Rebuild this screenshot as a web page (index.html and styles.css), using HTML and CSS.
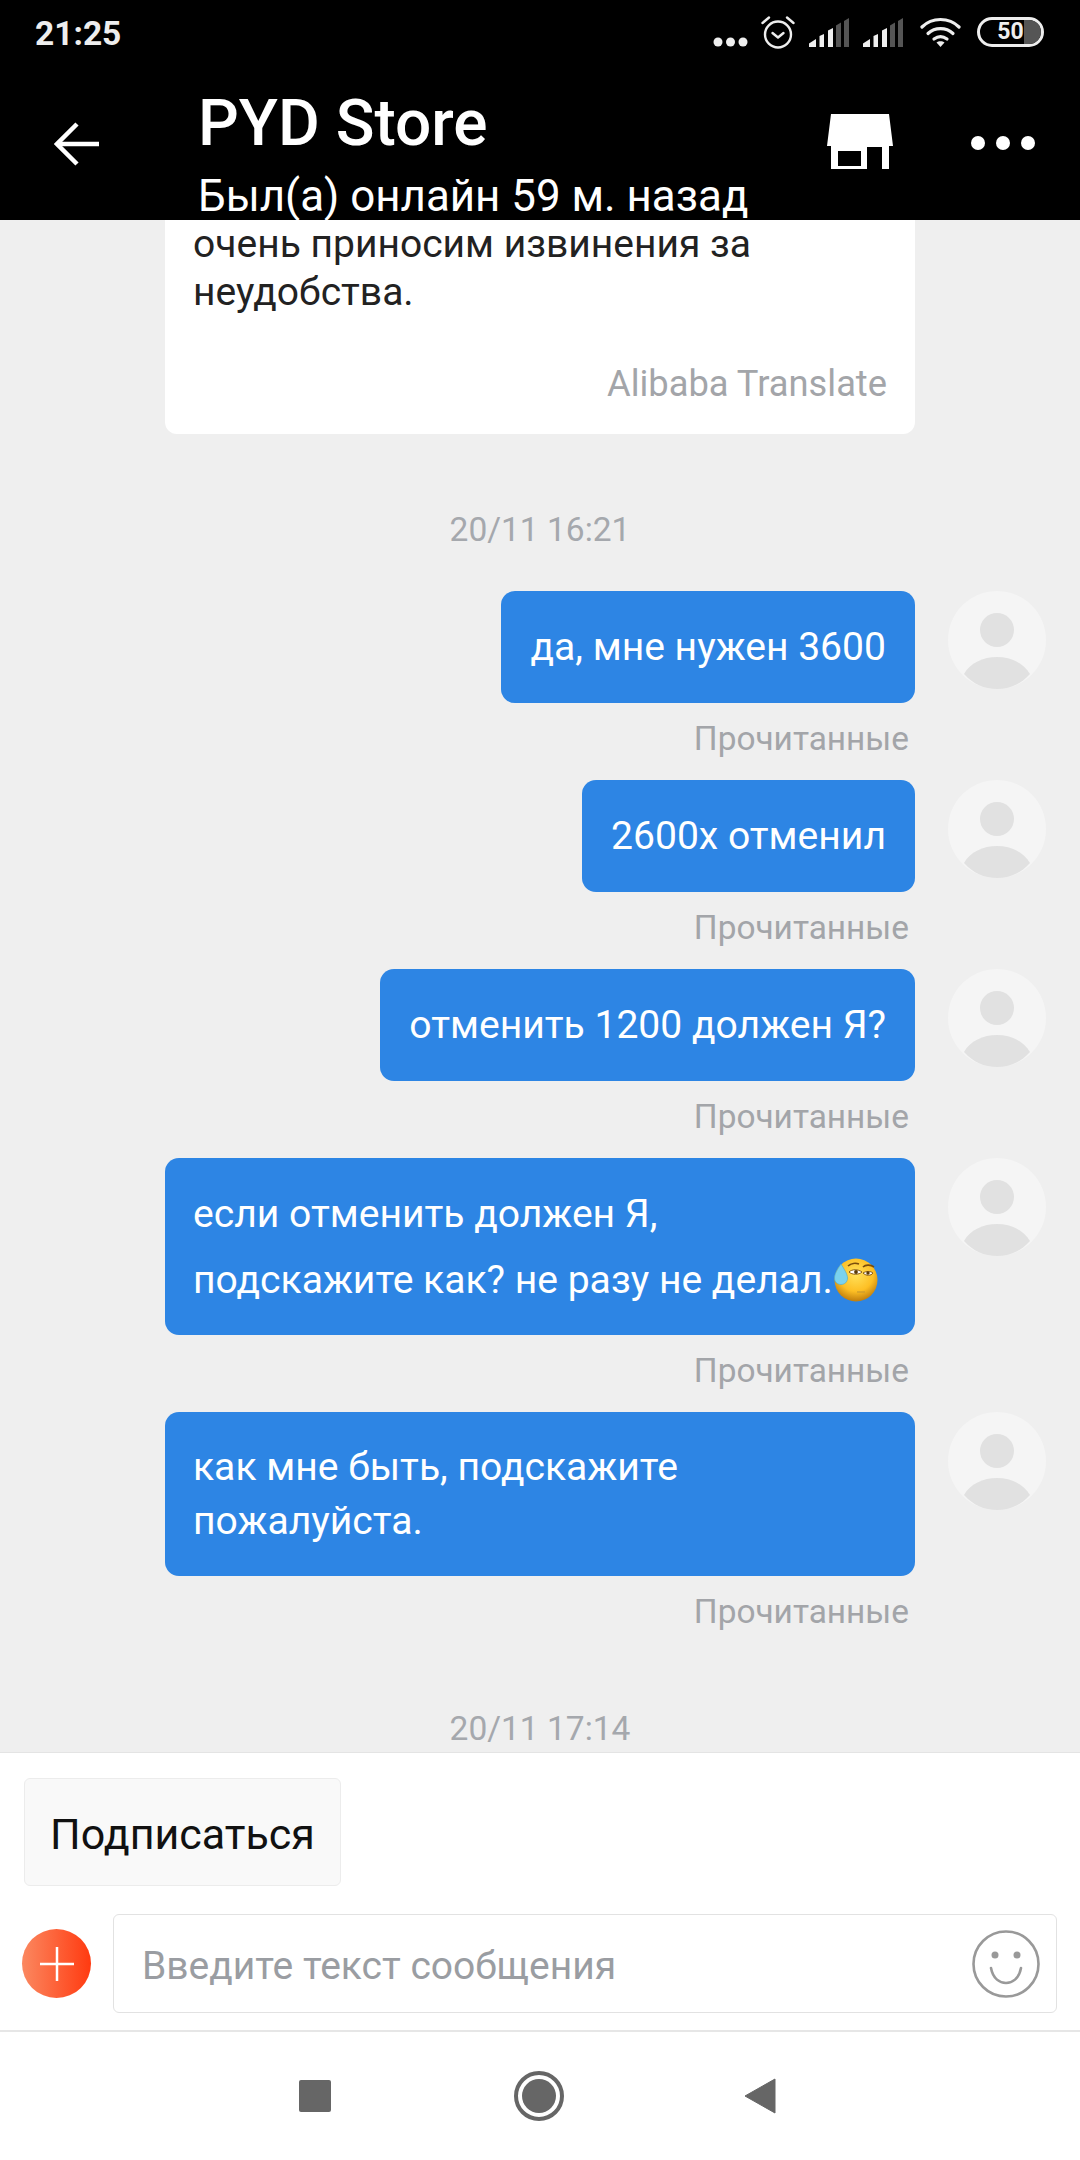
FILE: index.html
```html
<!DOCTYPE html>
<html lang="ru">
<head>
<meta charset="utf-8">
<title>PYD Store</title>
<link rel="stylesheet" href="styles.css">
</head>
<body>
<div class="app">
  <header class="top">
    <div class="status">
      <span class="clock">21:25</span>
      <div class="status-icons">
        <svg class="i-dots" viewBox="0 0 35 10"><circle cx="5" cy="5" r="4.500" fill="#eee"/><circle cx="17.500" cy="5" r="4.500" fill="#eee"/><circle cx="30" cy="5" r="4.500" fill="#eee"/></svg>
        <svg class="i-alarm" viewBox="0 0 34 33" fill="none" stroke="#eee" stroke-width="2.400"><circle cx="17" cy="18.500" r="13"/><path d="M11.500 17l5.500 4.500 5.500-4.500" stroke-linecap="round" stroke-linejoin="round"/><path d="M1.500 7l6.500-5.500M32.500 7L26 1.500" stroke-linecap="round"/></svg>
        <svg class="i-signal" viewBox="0 0 40 29"><path d="M0 29v-3.500l7-4.500v8z" fill="#eee"/><path d="M10.500 29V18l4.500-2v13z" fill="#eee"/><path d="M19 29V12.500l5-2.500v19z" fill="#eee"/><path d="M27 29V7.500l5-3V29z" fill="#555"/><path d="M35 29V3l5-3v29z" fill="#555"/></svg>
        <svg class="i-signal" viewBox="0 0 40 29"><path d="M0 29v-3.500l7-4.500v8z" fill="#eee"/><path d="M10.500 29V18l4.500-2v13z" fill="#eee"/><path d="M19 29V12.500l5-2.500v19z" fill="#eee"/><path d="M27 29V7.500l5-3V29z" fill="#555"/><path d="M35 29V3l5-3v29z" fill="#555"/></svg>
        <svg class="i-wifi" viewBox="0 0 41 30" fill="none" stroke="#eee" stroke-width="3.200" stroke-linecap="round"><path d="M2 10C12 0 29 0 39 10"/><path d="M8 16.500c7-6.500 18-6.500 25 0"/><path d="M14 22c4-3 9-3 13 0"/><path d="M16.500 25.500l4 4.500 4-4.500c-2-1.800-6-1.800-8 0z" fill="#eee" stroke="none"/></svg>
        <div class="battery"><div class="battery-fill"></div><span class="battery-num">50</span></div>
      </div>
    </div>
    <div class="titlebar">
      <svg class="i-back" viewBox="0 0 46 44" fill="none" stroke="#fff" stroke-width="4.500"><path d="M45 22H4"/><path d="M23 2L3 22l20 20"/></svg>
      <div class="titles">
        <div class="name">PYD Store</div>
        <div class="seen">Был(а) онлайн 59 м. назад</div>
      </div>
      <svg class="i-shop" viewBox="0 0 66 55"><path d="M4 0H62L66 32H0Z" fill="#fff"/><path fill-rule="evenodd" d="M4 32H62V55H55V33H40V55H4ZM11 37H34V52H11Z" fill="#fff"/></svg>
      <svg class="i-more" viewBox="0 0 64 14"><circle cx="7" cy="7" r="7" fill="#fff"/><circle cx="32" cy="7" r="7" fill="#fff"/><circle cx="57" cy="7" r="7" fill="#fff"/></svg>
    </div>
  </header>

  <main class="chat">
    <div class="card">
      <p class="card-text">очень приносим извинения за неудобства.</p>
      <div class="card-by">Alibaba Translate</div>
    </div>

    <div class="stamp stamp-first">20/11 16:21</div>

    <div class="msg">
      <div class="msg-body"><div class="bubble">да, мне нужен 3600</div><div class="read">Прочитанные</div></div>
      <svg class="avatar" viewBox="0 0 98 98"><circle cx="49" cy="49" r="49" fill="#f5f5f5"/><circle cx="49" cy="39" r="17" fill="#e1e1e1"/><path d="M16 83c6-11 19-17 33-17s27 6 33 17c-9 10-20 15-33 15s-24-5-33-15z" fill="#e1e1e1"/></svg>
    </div>
    <div class="msg">
      <div class="msg-body"><div class="bubble">2600х отменил</div><div class="read">Прочитанные</div></div>
      <svg class="avatar" viewBox="0 0 98 98"><circle cx="49" cy="49" r="49" fill="#f5f5f5"/><circle cx="49" cy="39" r="17" fill="#e1e1e1"/><path d="M16 83c6-11 19-17 33-17s27 6 33 17c-9 10-20 15-33 15s-24-5-33-15z" fill="#e1e1e1"/></svg>
    </div>
    <div class="msg">
      <div class="msg-body"><div class="bubble">отменить 1200 должен Я?</div><div class="read">Прочитанные</div></div>
      <svg class="avatar" viewBox="0 0 98 98"><circle cx="49" cy="49" r="49" fill="#f5f5f5"/><circle cx="49" cy="39" r="17" fill="#e1e1e1"/><path d="M16 83c6-11 19-17 33-17s27 6 33 17c-9 10-20 15-33 15s-24-5-33-15z" fill="#e1e1e1"/></svg>
    </div>
    <div class="msg">
      <div class="msg-body"><div class="bubble bubble-wide">если отменить должен Я,<br>подскажите как? не разу не делал.<svg class="emoji" viewBox="0 0 44 44"><defs><radialGradient id="face" cx="50%" cy="36%" r="62%"><stop offset="0" stop-color="#ffe25c"/><stop offset="0.65" stop-color="#fdbf24"/><stop offset="1" stop-color="#c4820f"/></radialGradient></defs><circle cx="22" cy="22" r="21.500" fill="url(#face)"/><path d="M15 14c3-3 9-3 13 0-3 3-10 3-13 0zM29 15c3-2 8-2 10 0-2 3-7 3-10 0z" fill="#fff" stroke="#8a5a10" stroke-width="1"/><circle cx="22" cy="14" r="1.900" fill="#5a3a08"/><circle cx="34" cy="15" r="1.700" fill="#5a3a08"/><path d="M14 8c3-3 8-3 11-2M29 9c3-3 8-2 11 0" fill="none" stroke="#7a4d0c" stroke-width="1.600"/><path d="M23 34h8" stroke="#c89a30" stroke-width="1.200"/><path d="M7 6C3 12 .5 16 .5 20c0 4 3 6.500 6.500 6.500s6.500-2.500 6.500-6.500c0-4-3.500-9-6.500-14z" fill="#7ad2ee" stroke="#4aa9cf" stroke-width=".6"/></svg></div><div class="read">Прочитанные</div></div>
      <svg class="avatar" viewBox="0 0 98 98"><circle cx="49" cy="49" r="49" fill="#f5f5f5"/><circle cx="49" cy="39" r="17" fill="#e1e1e1"/><path d="M16 83c6-11 19-17 33-17s27 6 33 17c-9 10-20 15-33 15s-24-5-33-15z" fill="#e1e1e1"/></svg>
    </div>
    <div class="msg">
      <div class="msg-body"><div class="bubble bubble-tight">как мне быть, подскажите<br>пожалуйста.</div><div class="read">Прочитанные</div></div>
      <svg class="avatar" viewBox="0 0 98 98"><circle cx="49" cy="49" r="49" fill="#f5f5f5"/><circle cx="49" cy="39" r="17" fill="#e1e1e1"/><path d="M16 83c6-11 19-17 33-17s27 6 33 17c-9 10-20 15-33 15s-24-5-33-15z" fill="#e1e1e1"/></svg>
    </div>

    <div class="stamp stamp-second">20/11 17:14</div>
  </main>

  <footer class="bottom">
    <div class="follow-row"><div class="follow">Подписаться</div></div>
    <div class="input-row">
      <div class="plus"><svg class="i-plus" viewBox="0 0 34 34" fill="none" stroke="#fff" stroke-width="2.500"><path d="M0 17h34M17 0v34"/></svg></div>
      <div class="input">
        <span class="placeholder">Введите текст сообщения</span>
        <svg class="i-smile" viewBox="0 0 68 68" fill="none" stroke="#999" stroke-width="2.600"><circle cx="34" cy="34" r="32.500"/><circle cx="23" cy="25" r="3.500" fill="#999" stroke="none"/><circle cx="45" cy="25" r="3.500" fill="#999" stroke="none"/><path d="M19 38c2 11 9 15 15 15s13-4 15-15" stroke-linecap="round"/></svg>
      </div>
    </div>
    <nav class="nav">
      <svg class="i-square" viewBox="0 0 32 32"><rect width="32" height="32" rx="2" fill="#666"/></svg>
      <svg class="i-home" viewBox="0 0 50 50"><circle cx="25" cy="25" r="23" fill="none" stroke="#666" stroke-width="4"/><circle cx="25" cy="25" r="17" fill="#666"/></svg>
      <svg class="i-tri" viewBox="0 0 32 36"><path d="M31 1v34L1 18z" fill="#666" stroke="#666" stroke-width="1" stroke-linejoin="round"/></svg>
    </nav>
  </footer>
</div>
</body>
</html>
```

FILE: styles.css
```css
* { box-sizing: border-box; }
html, body { margin: 0; padding: 0; }
body { font-family: Roboto, "Liberation Sans", sans-serif; background: #efefef; }
.app { width: 1080px; height: 2160px; display: flex; flex-direction: column; overflow: hidden; }

.top { height: 220px; flex: none; background: #000; color: #fff; }
.status { height: 66px; display: flex; align-items: flex-start; justify-content: space-between; padding: 16px 36px 0 35px; }
.clock { font-size: 33.500px; font-weight: 700; color: #eee; line-height: 34px; margin-top: 1px; }
.status-icons { display: flex; align-items: flex-end; height: 34px; }
.i-dots { width: 35px; height: 10px; margin-right: 13px; margin-bottom: 3px; }
.i-alarm { width: 34px; height: 33px; margin-right: 14px; margin-bottom: 1px; }
.i-signal { width: 40px; height: 29px; margin-bottom: 3px; }
.i-signal + .i-signal { margin-left: 14px; }
.i-wifi { width: 41px; height: 30px; margin-left: 17px; margin-bottom: 3px; }
.battery { width: 67px; height: 30px; border: 3px solid #eee; border-radius: 15px; margin-left: 16px; margin-bottom: 3px; position: relative; overflow: hidden; display: flex; align-items: center; justify-content: center; }
.battery-fill { position: absolute; right: 0; top: 0; bottom: 0; width: 17px; background: #555; }
.battery-num { position: relative; font-size: 23px; font-weight: 700; color: #eee; line-height: 24px; }

.titlebar { height: 154px; display: flex; align-items: flex-start; }
.i-back { width: 46px; height: 44px; margin: 56px 0 0 54px; flex: none; }
.titles { margin-left: 98px; width: 626px; flex: none; padding-top: 23px; }
.name { font-size: 64px; font-weight: 500; line-height: 70px; }
.seen { font-size: 43.900px; line-height: 48px; white-space: nowrap; margin-top: 13px; }
.i-shop { width: 66px; height: 55px; flex: none; margin: 48px 0 0 3px; }
.i-more { width: 64px; height: 14px; flex: none; margin: 70px 0 0 78px; }

.chat { flex: 1; min-height: 0; overflow: hidden; display: flex; flex-direction: column; background: #efefef; }
.card { flex: none; width: 750px; margin-left: 165px; background: #fff; border-radius: 0 0 12px 12px; padding: 0 28px; height: 214px; }
.card-text { margin: 0; font-size: 39px; line-height: 48px; color: #222; width: 660px; }
.card-by { text-align: right; font-size: 36.300px; line-height: 42px; color: #a3a5a9; margin-top: 47px; }

.stamp { flex: none; text-align: center; font-size: 33.500px; line-height: 36px; color: #a5a8ad; height: 36px; }
.stamp-first { margin-top: 78px; }
.stamp-second { margin-top: 58px; }

.msg { flex: none; display: flex; justify-content: flex-end; padding-right: 34px; }
.stamp-first + .msg { margin-top: 43px; }
.msg-body { width: 750px; margin-right: 33px; display: flex; flex-direction: column; align-items: flex-end; }
.bubble { background: #2d85e4; color: #fff; border-radius: 14px; font-size: 39.100px; line-height: 54px; padding: 29px; white-space: nowrap; }
.bubble-wide { width: 750px; padding: 23px 28px 22px; line-height: 66px; }
.bubble-tight { width: 750px; padding: 28px; }
.read { font-size: 33.400px; line-height: 40px; color: #a3a5a9; margin: 16px 6px 21px 0; height: 40px; }
.avatar { width: 98px; height: 98px; flex: none; }
.emoji { width: 44px; height: 44px; vertical-align: -9px; margin-left: 1px; }

.bottom { flex: none; height: 408px; background: #fff; border-top: 1px solid #e4e4e4; display: flex; flex-direction: column; }
.follow-row { padding: 25px 0 0 24px; }
.follow { width: 317px; height: 108px; background: #f9f9f9; border: 1px solid #ececec; border-radius: 6px; display: flex; align-items: center; justify-content: center; font-size: 43px; color: #111; padding-top: 3px; }
.input-row { display: flex; align-items: center; margin-top: 28px; padding: 0 23px 0 22px; height: 99px; }
.plus { width: 69px; height: 69px; border-radius: 50%; flex: none; background: linear-gradient(90deg, #fb8860, #ff3a10); display: flex; align-items: center; justify-content: center; }
.i-plus { width: 34px; height: 34px; }
.input { flex: 1; margin-left: 22px; height: 99px; border: 1.500px solid #e2e2e2; border-radius: 6px; display: flex; align-items: center; justify-content: space-between; padding: 0 16px 0 28px; }
.placeholder { font-size: 39px; color: #9a9da2; margin-top: 4px; }
.i-smile { width: 68px; height: 68px; }
.nav { flex: 1; margin-top: 17px; border-top: 2px solid #e6e6e6; display: flex; align-items: center; justify-content: center; }
.i-square { width: 32px; height: 32px; }
.i-home { width: 50px; height: 50px; margin-left: 183px; }
.i-tri { width: 32px; height: 36px; margin-left: 180px; margin-right: 5px; }
```
